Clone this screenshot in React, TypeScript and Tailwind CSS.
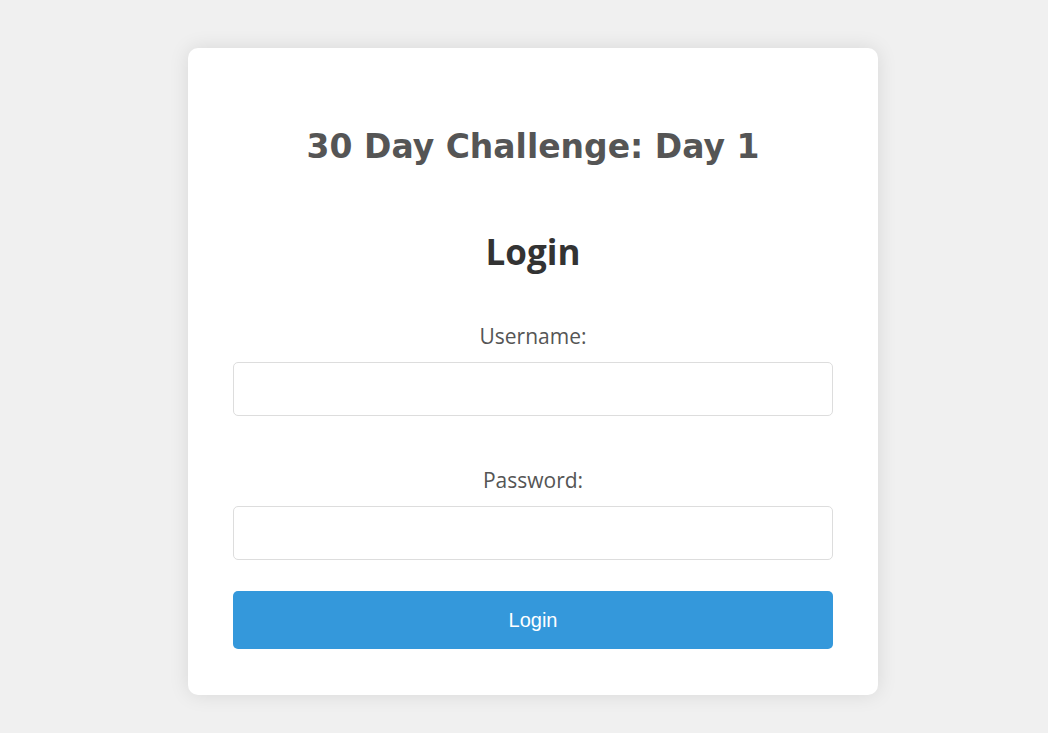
export default function App() {
  return (
    <div className="min-h-screen bg-[#f0f0f0] flex justify-center pt-[48px] pl-[18px]">
      <div className="w-[690px] h-[647px] bg-white rounded-[10px] shadow-[0_0_20px_rgba(0,0,0,0.1)] px-[45px] pt-[75px] pb-[46px] flex flex-col">
        {/* Title */}
        <h1 className="text-center text-[#555] font-bold text-[33px] leading-[48px] font-['DejaVu_Sans',sans-serif]">
          30 Day Challenge: Day 1
        </h1>

        <h2 className="mt-[61px] text-center text-[#333] font-bold text-[35px] leading-[40px] font-['Open_Sans',sans-serif]">
          Login
        </h2>

        <form className="flex flex-col" onSubmit={(e) => e.preventDefault()}>
          <label className="mt-[52px] text-center text-[#555] text-[21px] leading-[24px] font-['Open_Sans',sans-serif]">
            Username:
          </label>
          <input
            type="text"
            className="mt-[14px] h-[54px] w-full border border-[#ddd] rounded-[5px] px-3 outline-none"
          />

          <label className="mt-[52px] text-center text-[#555] text-[21px] leading-[24px] font-['Open_Sans',sans-serif]">
            Password:
          </label>
          <input
            type="password"
            className="mt-[14px] h-[54px] w-full border border-[#ddd] rounded-[5px] px-3 outline-none"
          />

          <button
            type="submit"
            className="mt-[31px] h-[58px] w-full bg-[#3498db] text-white text-[20px] rounded-[5px] font-['Liberation_Sans',Arial,sans-serif]"
          >
            Login
          </button>
        </form>
      </div>
    </div>
  );
}
